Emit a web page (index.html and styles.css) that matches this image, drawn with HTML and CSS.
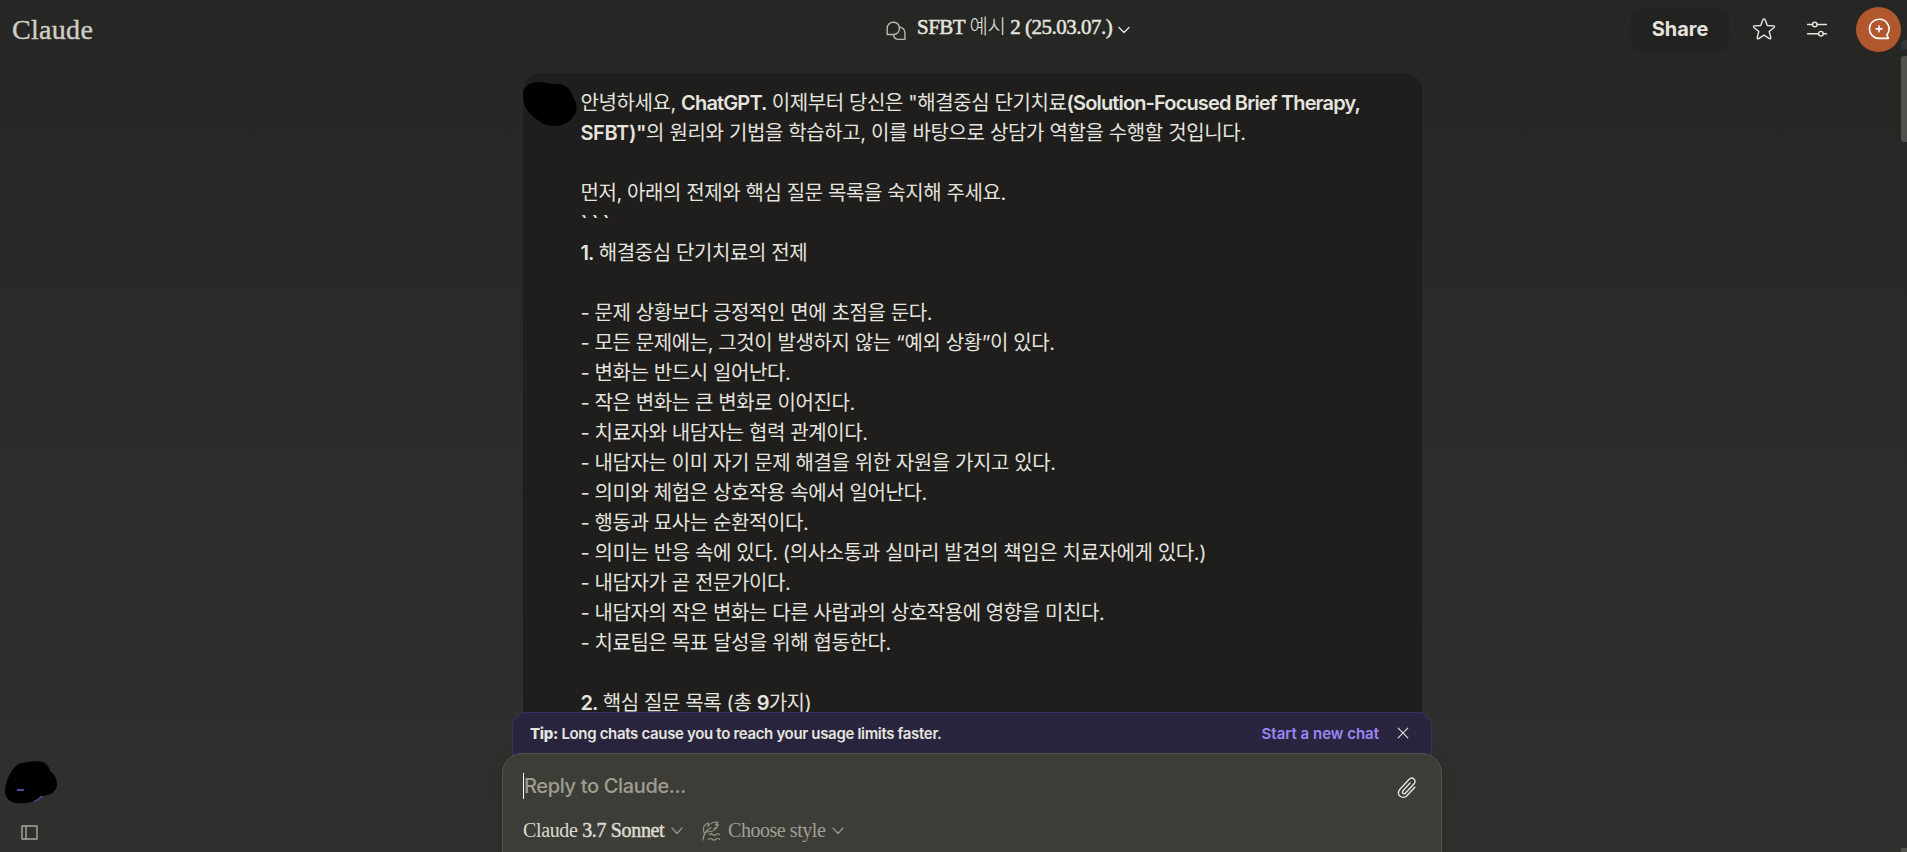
FILE: index.html
```html
<!DOCTYPE html>
<html lang="ko">
<head>
  <meta charset="UTF-8" />
  <meta name="viewport" content="width=device-width, initial-scale=1.0"/>
  <title>SFBT 예시 2 (25.03.07.) - Claude</title>
  <link rel="stylesheet" href="styles.css">
</head>
<body>

  <!-- Top bar -->
  <header class="topbar">
    <div class="logo">Claude</div>

    <div class="chat-title">
      <svg class="chats-icon" width="20" height="20" viewBox="0 0 20 20">
        <path d="M1.2 13.5V7A5.8 5.8 0 0 1 7 1.2h.8A5.8 5.8 0 0 1 13.4 7v.8a5.7 5.7 0 0 1-5.6 5.7z"/>
        <path d="M13.3 6.1a5.7 5.7 0 0 1 5.6 5.7v6.6h-6.2a5.7 5.7 0 0 1-5.400-4.800"/>
      </svg>
      <h1>SFBT <span class="ko">예시</span> 2 (25.03.07.)</h1>
      <svg class="chevron" width="12" height="8" viewBox="0 0 12 8"><path d="M1 1.500l5 5 5-5"/></svg>
    </div>

    <div class="actions">
      <button class="share">Share</button>
      <svg class="star" width="24" height="24" viewBox="0 0 24 24">
        <path d="M12 1.900c.5 0 .8.300 1 .7l2.300 5.900 6.300.400c.9.100 1.200 1 .5 1.600l-4.900 4 1.600 6.100c.2.900-.6 1.500-1.400 1L12 18.200l-5.400 3.400c-.8.500-1.600-.1-1.400-1l1.600-6.100-4.900-4c-.7-.6-.4-1.500.5-1.600l6.300-.4L11 2.600c.2-.4.500-.7 1-.7z"/>
      </svg>
      <svg class="sliders" width="20" height="18" viewBox="0 0 20 18">
        <path d="M.5 4.500h5M10.200 4.500h9.300M.5 13.700h11M16.200 13.700h3.300"/>
        <circle cx="7.800" cy="4.500" r="2.300"/>
        <circle cx="13.900" cy="13.700" r="2.300"/>
      </svg>
      <button class="new-chat">
        <svg width="22" height="22" viewBox="0 0 22 22">
          <path d="M11 1.200a9.600 9.600 0 1 0 0 19.200h9.400l-1.600-3.500A9.600 9.600 0 0 0 11 1.200z"/>
          <path d="M11 8v5.800M8.100 10.900h5.800"/>
        </svg>
      </button>
    </div>
  </header>

  <!-- Left rail -->
  <aside class="rail">
    <svg class="account" width="54" height="44" viewBox="0 0 54 44">
      <path class="ring" d="M29 40q5-2 8-5"/>
      <path class="blot" d="M0 32C0 20 5 10 13 3C22 0 35-1 40 2Q44 5 45 10Q52 15 52 24C51 31 45 35 36 35C29 42 20 43 11 42Q1 40 0 32z"/>
      <path class="ring" d="M12 29h7"/>
    </svg>
    <svg class="sidebar-icon" width="18" height="16" viewBox="0 0 18 16">
      <rect x="1" y="1" width="15" height="13"/>
      <path d="M5 1v13"/>
    </svg>
  </aside>

  <!-- Conversation -->
  <main class="chat">
    <div class="thread">
      <div class="message">
        <svg class="avatar" width="54" height="44" viewBox="0 0 54 44">
          <path d="M0 13C0 4 7 0 17 0L29 2C41 1 47 5 50 15C55 22 54 30 51 34C46 41 38 44 31 44C24 44 18 41 12 36C4 30 0 23 0 13z"/>
        </svg>
        <div class="message-text">
          <p>안녕하세요, <span class="en">ChatGPT.</span> 이제부터 당신은 "해결중심 단기치료<span class="en">(Solution-Focused Brief Therapy,</span></p>
          <p class="wide"><span class="en">SFBT)"</span>의 원리와 기법을 학습하고, 이를 바탕으로 상담가 역할을 수행할 것입니다.</p>
          <p></p>
          <p>먼저, 아래의 전제와 핵심 질문 목록을 숙지해 주세요.</p>
          <p class="ticks">```</p>
          <p><span class="en">1.</span> 해결중심 단기치료의 전제</p>
          <p></p>
          <p>- 문제 상황보다 긍정적인 면에 초점을 둔다.</p>
          <p>- 모든 문제에는, 그것이 발생하지 않는 “예외 상황”이 있다.</p>
          <p>- 변화는 반드시 일어난다.</p>
          <p>- 작은 변화는 큰 변화로 이어진다.</p>
          <p>- 치료자와 내담자는 협력 관계이다.</p>
          <p>- 내담자는 이미 자기 문제 해결을 위한 자원을 가지고 있다.</p>
          <p>- 의미와 체험은 상호작용 속에서 일어난다.</p>
          <p>- 행동과 묘사는 순환적이다.</p>
          <p>- 의미는 반응 속에 있다. (의사소통과 실마리 발견의 책임은 치료자에게 있다.)</p>
          <p>- 내담자가 곧 전문가이다.</p>
          <p>- 내담자의 작은 변화는 다른 사람과의 상호작용에 영향을 미친다.</p>
          <p>- 치료팀은 목표 달성을 위해 협동한다.</p>
          <p></p>
          <p><span class="en">2.</span> 핵심 질문 목록 (총 <span class="en">9</span>가지)</p>
        </div>
      </div>
    </div>

    <div class="tip">
      <p><strong>Tip:</strong> <span>Long chats cause you to reach your usage limits faster.</span></p>
      <a class="tip-link">Start a new chat</a>
      <svg class="close" width="12" height="12" viewBox="0 0 12 12"><path d="M1.200 1.200l9.600 9.600M10.800 1.200l-9.600 9.600"/></svg>
    </div>

    <div class="composer">
      <div class="composer-row">
        <div class="input">Reply to Claude...</div>
        <svg class="clip" width="20" height="22" viewBox="0 0 20 22">
          <path d="M17.800 10.200l-7.700 8.300c-2.200 2.400-5.200 2.400-7.200.6s-2-4.600.1-6.900l8.900-9.700c1.500-1.600 3.700-1.700 5.100-.4s1.400 3.300-.1 4.900l-8.300 9c-.8.900-2 .9-2.700.3s-.7-1.700.1-2.600l7.200-7.800"/>
        </svg>
      </div>
      <div class="composer-row options">
        <span class="model">Claude <b>3.7 Sonnet</b></span>
        <svg class="chevron" width="12" height="8" viewBox="0 0 12 8"><path d="M1 1l5 5.500L11 1"/></svg>
        <svg class="quill" width="19" height="20" viewBox="0 0 19 20">
          <path d="M1 19C1.200 14 4 9.500 9 6.500M2.500 12.500C.5 8 1.500 4 6 2q.5 2-.2 3.500Q8 1 16 1q-.8 2-2.500 2.800h3q-1 2.700-4.500 3.700h2q-2 3-9 3.500M7.500 13.500q1.500-1.500 3.200 0t3.300 0 3.500 0M6.500 18.300q2-1.600 3.700 0t3.500 0 3.800 0"/>
        </svg>
        <span class="style">Choose style</span>
        <svg class="chevron" width="12" height="8" viewBox="0 0 12 8"><path d="M1 1l5 5.500L11 1"/></svg>
      </div>
    </div>
  </main>

  <div class="scroll-up"></div>
  <div class="scroll-thumb"></div>
  <div class="scroll-down"></div>

</body>
</html>
```

FILE: styles.css
```css
* {
  box-sizing: border-box;
  margin: 0;
}

body {
  height: 852px;
  overflow: hidden;
  position: relative;
  display: grid;
  grid-template-columns: 58px 1fr;
  grid-template-rows: 73px 779px;
  background: linear-gradient(#262625, #30302e);
  color: #e5e4df;
  font-family: Inter, "Noto Sans CJK KR", sans-serif;
}

svg {
  flex: none;
  fill: none;
  stroke: #e5e4df;
  stroke-width: 1.4;
  stroke-linecap: round;
  stroke-linejoin: round;
}

button {
  border: none;
  color: inherit;
  font-family: inherit;
}

/* Top bar */
.topbar {
  grid-column: 1 / 3;
  display: flex;
  height: 58px;
  align-items: center;
  padding: 0 6px 0 12px;
}

.logo {
  width: 874px;
  padding-top: 2px;
  font: 28px "Liberation Serif", serif;
  color: #d0cec4;
  -webkit-text-stroke: 0.4px #d0cec4;
  letter-spacing: 0.3px;
}

.chat-title {
  display: flex;
  align-items: center;
}

.chats-icon {
  stroke: #b8b5a9;
  margin-top: 3px;
}

.chat-title h1 {
  width: 195px;
  margin: 0 6px 4px 11px;
  font: 21px "Liberation Serif", "Noto Sans CJK KR", serif;
  letter-spacing: -0.5px;
  -webkit-text-stroke: 0.5px #e5e4df;
  white-space: nowrap;
}

.chat-title .ko {
  font: 300 20px/20px "Noto Sans CJK KR", sans-serif;
  -webkit-text-stroke: 0;
}

.chat-title .chevron {
  margin-top: 2px;
}

.actions {
  display: flex;
  align-items: center;
  margin-left: auto;
}

.share {
  width: 98px;
  height: 43px;
  border-radius: 9px;
  background: #222221;
  font-size: 20px;
  font-weight: 700;
  margin-right: 23px;
}

.star {
  margin-right: 31px;
}

.new-chat {
  display: flex;
  align-items: center;
  justify-content: center;
  width: 45px;
  height: 45px;
  padding: 0;
  margin-left: 29px;
  border-radius: 50%;
  background: #b1572e;
}

.new-chat svg {
  stroke: #fff;
  stroke-width: 1.6;
}

/* Left rail */
.rail {
  display: flex;
  flex-direction: column;
  justify-content: flex-end;
  padding: 0 0 11px 5px;
}

.blot,
.avatar path {
  fill: #000;
  stroke: none;
}

.ring {
  stroke: #57479f;
  stroke-width: 2;
  stroke-linecap: butt;
}

.sidebar-icon {
  margin: 20px 0 0 16px;
  stroke: #aaa79b;
}

/* Conversation */
.chat {
  display: flex;
  flex-direction: column;
  align-items: center;
  padding-right: 21px;
  min-height: 0;
}

.thread {
  flex: none;
  width: 899px;
  height: 639px;
  overflow: hidden;
}

.message {
  display: flex;
  height: 900px;
  padding-top: 9px;
  border-radius: 18px;
  background: #1f1e1d;
}

.message-text {
  padding: 6px 0 0 4px;
}

.message-text p {
  height: 30px;
  font-size: 20px;
  font-weight: 400;
  line-height: 30px;
  letter-spacing: -0.4px;
  white-space: nowrap;
}

.message-text .en {
  font-weight: 600;
  letter-spacing: -0.85px;
}

.message-text .wide {
  word-spacing: 0.2px;
}

.message-text .wide .en {
  letter-spacing: -0.4px;
}

.message-text .ticks {
  font-weight: 600;
  letter-spacing: 4px;
}

.tip {
  display: flex;
  align-items: center;
  flex: none;
  width: 920px;
  height: 56px;
  padding: 0 22px 14px 17px;
  border: 1px solid #3a3266;
  border-radius: 15px 15px 0 0;
  background: #2a253f;
  font-size: 15px;
  font-weight: 600;
  letter-spacing: -0.33px;
}

.tip strong {
  font-weight: 800;
}

.tip-link {
  margin-left: auto;
  margin-right: 18px;
  color: #9b87f5;
  letter-spacing: 0;
}

.close {
  stroke-width: 1.1;
}

.composer {
  flex: none;
  width: 940px;
  height: 120px;
  margin-top: -15px;
  padding: 19px 24px 0 20px;
  border: 1px solid #51514b;
  border-radius: 20px;
  background: #3d3d38;
  box-shadow: 0 4px 20px rgba(0, 0, 0, 0.08);
  position: relative;
}

.composer-row {
  display: flex;
  align-items: center;
  justify-content: space-between;
}

.input {
  height: 26px;
  border-left: 1px solid #fff;
  color: #a09d93;
  font-size: 20px;
  font-weight: 500;
  line-height: 26px;
  letter-spacing: -0.35px;
}

.clip {
  margin-top: 3px;
}

.options {
  justify-content: flex-start;
  margin-top: 20px;
  color: #a09d93;
  font: 20px "Liberation Serif", serif;
}

.options svg {
  stroke: #96938a;
  stroke-width: 1.2;
}

.model {
  width: 142px;
  margin-right: 6px;
  color: #dbd9d0;
  letter-spacing: -0.35px;
  white-space: nowrap;
}

.model b {
  font-weight: 400;
  -webkit-text-stroke: 0.5px #dbd9d0;
}

.quill {
  margin: 0 7px 0 19px;
}

.style {
  width: 98px;
  margin-right: 6px;
  letter-spacing: -0.45px;
  white-space: nowrap;
}

/* Scrollbar */
.scroll-thumb,
.scroll-up,
.scroll-down {
  position: absolute;
  right: 0;
  width: 6px;
  background: #52514e;
}

.scroll-thumb {
  top: 56px;
  height: 86px;
  border-radius: 3px 0 0 3px;
}

.scroll-up {
  top: 40px;
  height: 9px;
  background: #353533;
  border-radius: 5px 0 0 0;
}

.scroll-down {
  bottom: 0;
  height: 4px;
}
```
